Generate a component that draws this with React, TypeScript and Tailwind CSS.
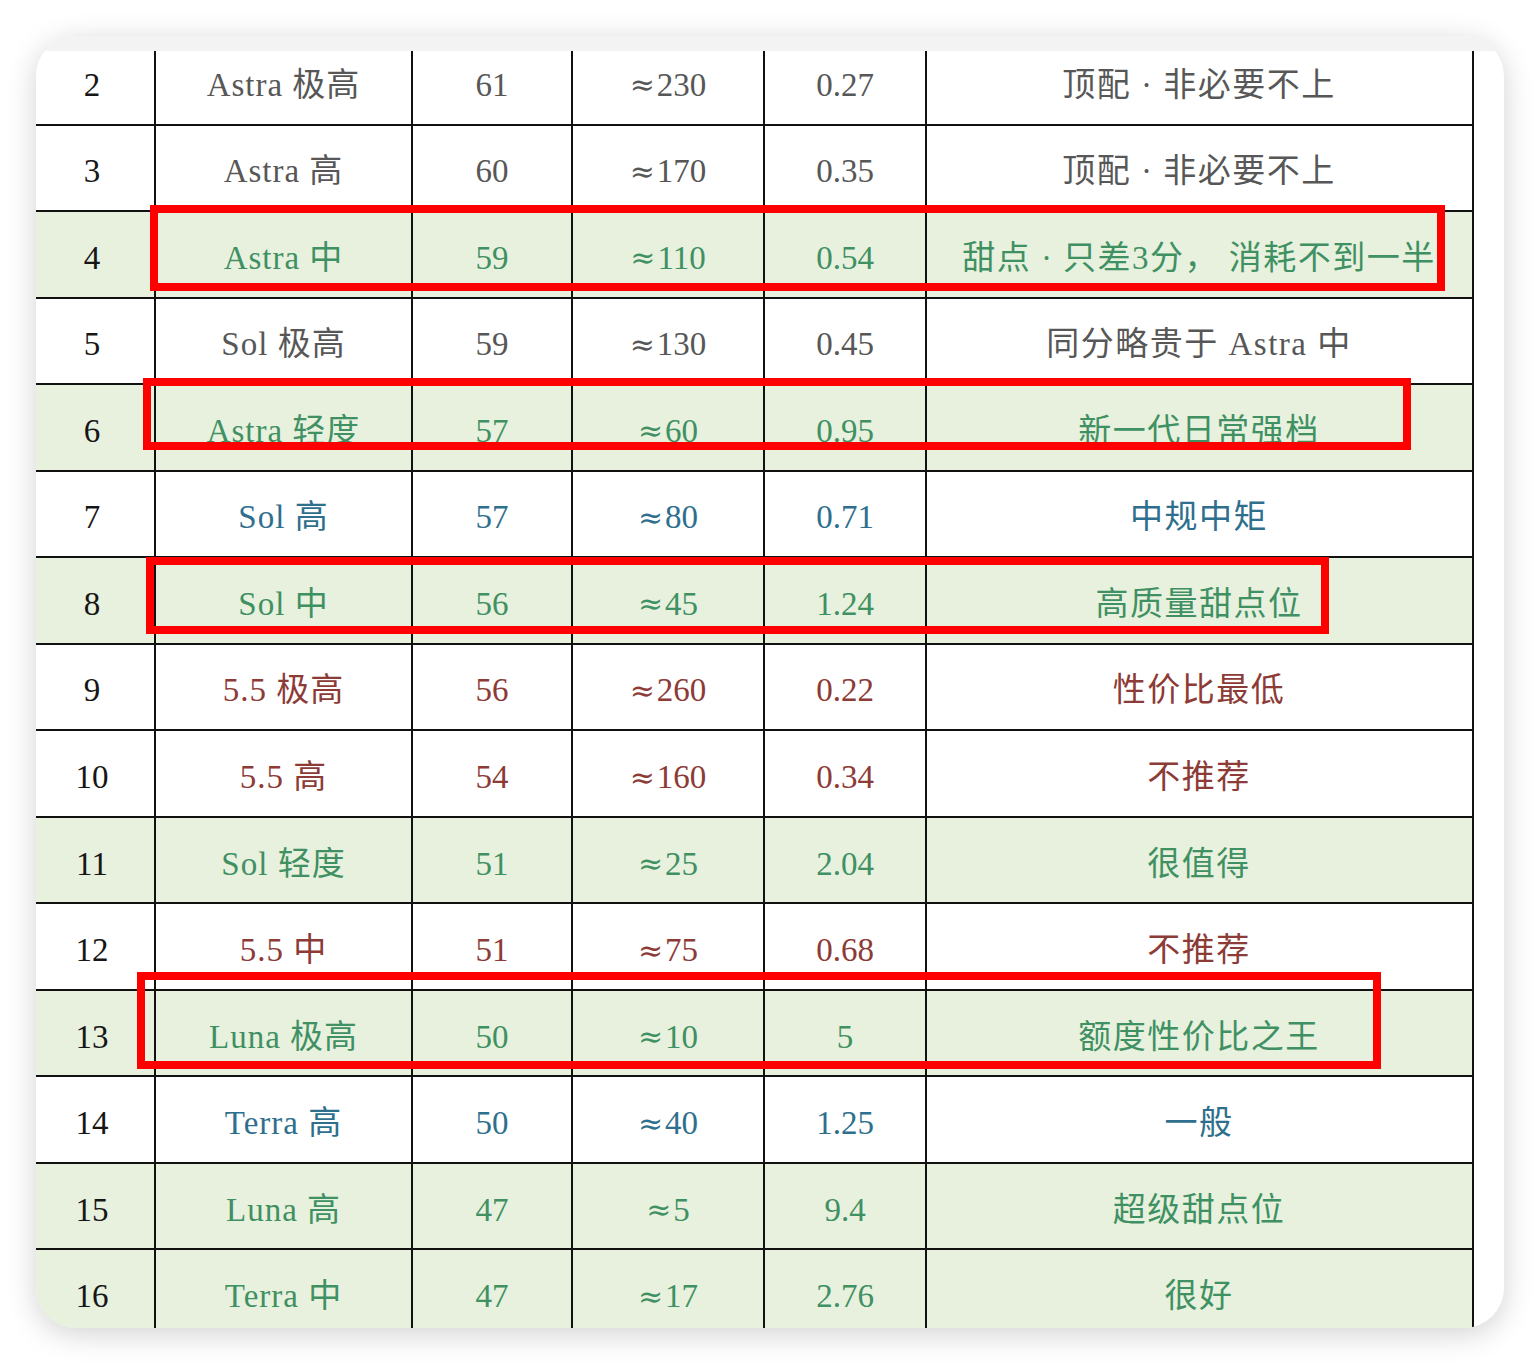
import React from "react";

type Tone = "gray" | "green" | "blue" | "brown";

type Row = {
  no: number;
  name: string;
  score: string;
  cost: string;
  ratio: string;
  note: string;
  tone: Tone;
};

const rows: Row[] = [
  { no: 2, name: "Astra 极高", score: "61", cost: "230", ratio: "0.27", note: "顶配 · 非必要不上", tone: "gray" },
  { no: 3, name: "Astra 高", score: "60", cost: "170", ratio: "0.35", note: "顶配 · 非必要不上", tone: "gray" },
  { no: 4, name: "Astra 中", score: "59", cost: "110", ratio: "0.54", note: "甜点 · 只差3分， 消耗不到一半", tone: "green" },
  { no: 5, name: "Sol 极高", score: "59", cost: "130", ratio: "0.45", note: "同分略贵于 Astra 中", tone: "gray" },
  { no: 6, name: "Astra 轻度", score: "57", cost: "60", ratio: "0.95", note: "新一代日常强档", tone: "green" },
  { no: 7, name: "Sol 高", score: "57", cost: "80", ratio: "0.71", note: "中规中矩", tone: "blue" },
  { no: 8, name: "Sol 中", score: "56", cost: "45", ratio: "1.24", note: "高质量甜点位", tone: "green" },
  { no: 9, name: "5.5 极高", score: "56", cost: "260", ratio: "0.22", note: "性价比最低", tone: "brown" },
  { no: 10, name: "5.5 高", score: "54", cost: "160", ratio: "0.34", note: "不推荐", tone: "brown" },
  { no: 11, name: "Sol 轻度", score: "51", cost: "25", ratio: "2.04", note: "很值得", tone: "green" },
  { no: 12, name: "5.5 中", score: "51", cost: "75", ratio: "0.68", note: "不推荐", tone: "brown" },
  { no: 13, name: "Luna 极高", score: "50", cost: "10", ratio: "5", note: "额度性价比之王", tone: "green" },
  { no: 14, name: "Terra 高", score: "50", cost: "40", ratio: "1.25", note: "一般", tone: "blue" },
  { no: 15, name: "Luna 高", score: "47", cost: "5", ratio: "9.4", note: "超级甜点位", tone: "green" },
  { no: 16, name: "Terra 中", score: "47", cost: "17", ratio: "2.76", note: "很好", tone: "green" },
];

const toneText: Record<Tone, string> = {
  gray: "text-[#575757]",
  green: "text-[#3f9062]",
  blue: "text-[#2f6f8e]",
  brown: "text-[#8c3b36]",
};

// red highlight frames drawn over the table
const frames = [
  "left-[150px] top-[205px] w-[1295px] h-[86px]",
  "left-[143px] top-[378px] w-[1268px] h-[72px]",
  "left-[146px] top-[557px] w-[1183px] h-[77px]",
  "left-[137px] top-[972px] w-[1244px] h-[97px]",
];

const cell = "flex items-center justify-center border-l-2 border-[#111] pt-[8px] ";

const App = () => {
  return (
    <div
      className="relative w-[1540px] h-[1364px] bg-white pt-[36px] pl-[36px]"
      style={{ fontFamily: '"Liberation Serif", "Noto Sans CJK SC", serif' }}
    >
      <div className="w-[1468px] h-[1292px] rounded-[40px] overflow-hidden bg-white shadow-[0_6px_30px_rgba(0,0,0,0.18)] flex flex-col">
        {/* top strip */}
        <div className="h-[15px] shrink-0 bg-[#f3f3f3]" />

        <div className="flex-1 overflow-hidden">
          <div className="-mt-[12px] w-[1438px] border-r-2 border-[#111]">
            {rows.map((r) => (
              <div
                key={r.no}
                className={
                  "grid grid-cols-[118px_257px_160px_192px_162px_546px] h-[86.54px] border-b-2 border-[#111] text-[33px] leading-none " +
                  (r.tone === "green" ? "bg-[#e8f0de]" : "bg-white")
                }
              >
                <div className="flex items-center justify-center pt-[8px] pr-[6px] text-[#161616]">
                  {r.no}
                </div>
                <div className={cell + "tracking-[1px] " + toneText[r.tone]}>
                  {r.name}
                </div>
                <div className={cell + toneText[r.tone]}>{r.score}</div>
                <div className={cell + toneText[r.tone]}>
                  <span className="font-['DejaVu_Serif'] text-[30px] mr-[2px]">≈</span>
                  {r.cost}
                </div>
                <div className={cell + toneText[r.tone]}>{r.ratio}</div>
                <div className={cell + "whitespace-pre tracking-[1.5px] " + toneText[r.tone]}>
                  {r.note}
                </div>
              </div>
            ))}
          </div>
        </div>
      </div>

      {frames.map((f, i) => (
        <div key={i} className={"absolute border-[8px] border-[#ff0000] " + f} />
      ))}
    </div>
  );
};

export default App;
